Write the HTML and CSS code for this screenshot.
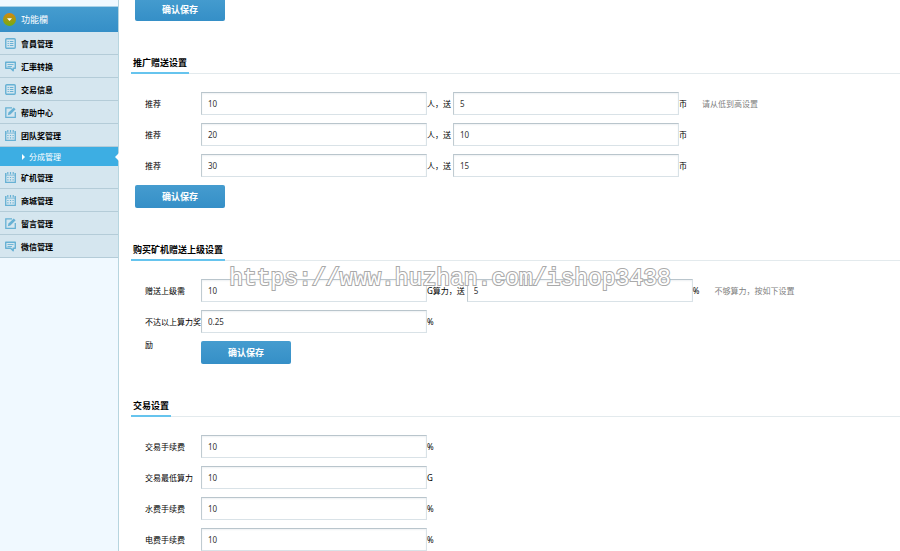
FILE: index.html
```
<!DOCTYPE html>
<html lang="zh-CN">
<head>
  <meta charset="UTF-8">
  <title>分成管理</title>
  <link rel="stylesheet" href="styles.css">
</head>
<body>
  <svg class="sprite" aria-hidden="true">
    <symbol id="icon-list" viewBox="0 0 11 11">
      <rect x="0.75" y="0.75" width="9.5" height="9.5" rx="1" fill="none" stroke="currentColor" stroke-width="1.4"/>
      <path d="M2.6 3.5h1.2M2.6 5.5h1.2M2.6 7.5h1.2M4.8 3.5h3.6M4.8 5.5h3.6M4.8 7.5h3.6" stroke="currentColor"/>
    </symbol>
    <symbol id="icon-chat" viewBox="0 0 11 11">
      <path d="M0.7 1.2h9.6v6H8.2v2.6L5.6 7.2H0.7z" fill="none" stroke="currentColor" stroke-width="1.4" stroke-linejoin="round"/>
      <path d="M2.5 3.5h6M2.5 5.5h4.5" stroke="currentColor" stroke-width="0.9"/>
    </symbol>
    <symbol id="icon-edit" viewBox="0 0 11 11">
      <path d="M7 0.8H0.8v9.5h9.5V5" fill="none" stroke="currentColor" stroke-width="1.3"/>
      <path d="M2.8 8.2l0.7-2.6L8.7 0.4l1.9 1.9L5.4 7.5z" fill="currentColor"/>
    </symbol>
    <symbol id="icon-date" viewBox="0 0 11 11">
      <path d="M1.5 1.7H0.7v8.6h9.6V1.7H9.5" fill="none" stroke="currentColor" stroke-width="1.3"/>
      <path d="M0.7 3.2h9.6" stroke="currentColor" stroke-width="0.7"/>
      <path d="M2.8 0v2.5M5.5 0v2.5M8.2 0v2.5" stroke="currentColor" stroke-width="1.2"/>
      <path d="M2.3 5.5h6.4M2.3 7.8h6.4" stroke="currentColor" stroke-width="1.2" stroke-dasharray="1.2 1.4"/>
    </symbol>
  </svg>

  <aside class="sidebar">
    <div class="menu-head">
      <svg class="head-icon" viewBox="0 0 13 13">
        <defs>
          <linearGradient id="ball" x1="0" y1="0" x2="0" y2="1">
            <stop offset="0" stop-color="#d9860f"/>
            <stop offset="1" stop-color="#6fae12"/>
          </linearGradient>
        </defs>
        <circle cx="6.5" cy="6.5" r="6.5" fill="url(#ball)"/>
        <path d="M4 5.3h5L6.5 8z" fill="#fff"/>
      </svg>
      功能欄
    </div>
    <nav class="menu">
      <a href="#"><svg><use href="#icon-list"/></svg>會員管理</a>
      <a href="#"><svg><use href="#icon-chat"/></svg>汇率转换</a>
      <a href="#"><svg><use href="#icon-list"/></svg>交易信息</a>
      <a href="#"><svg><use href="#icon-edit"/></svg>帮助中心</a>
      <a href="#"><svg><use href="#icon-date"/></svg>团队奖管理</a>
      <a href="#" class="sub active">分成管理</a>
      <a href="#"><svg><use href="#icon-date"/></svg>矿机管理</a>
      <a href="#"><svg><use href="#icon-date"/></svg>商城管理</a>
      <a href="#"><svg><use href="#icon-edit"/></svg>留言管理</a>
      <a href="#"><svg><use href="#icon-chat"/></svg>微信管理</a>
    </nav>
  </aside>

  <main class="content">
    <form class="section">
      <button type="button" class="btn">确认保存</button>
    </form>

    <form class="section">
      <div class="title"><h2>推广赠送设置</h2></div>
      <div class="row">
        <label for="num1">推荐</label>
        <input type="text" id="num1" value="10">
        <label class="unit" for="coin1">人，送</label>
        <input type="text" id="coin1" value="5">
        <span>币</span>
        <span class="hint">请从低到高设置</span>
      </div>
      <div class="row">
        <label for="num2">推荐</label>
        <input type="text" id="num2" value="20">
        <label class="unit" for="coin2">人，送</label>
        <input type="text" id="coin2" value="10">
        <span>币</span>
      </div>
      <div class="row">
        <label for="num3">推荐</label>
        <input type="text" id="num3" value="30">
        <label class="unit" for="coin3">人，送</label>
        <input type="text" id="coin3" value="15">
        <span>币</span>
      </div>
      <button type="button" class="btn">确认保存</button>
    </form>

    <form class="section">
      <div class="title"><h2>购买矿机赠送上级设置</h2></div>
      <div class="row">
        <label for="power">赠送上级需</label>
        <input type="text" id="power" value="10">
        <label class="unit" for="rate">G算力，送</label>
        <input type="text" id="rate" value="5">
        <span>%</span>
        <span class="hint">不够算力，按如下设置</span>
      </div>
      <div class="row">
        <label for="reward">不达以上算力奖励</label>
        <input type="text" id="reward" value="0.25">
        <span>%</span>
      </div>
      <button type="button" class="btn btn-indent">确认保存</button>
    </form>

    <form class="section">
      <div class="title"><h2>交易设置</h2></div>
      <div class="row">
        <label for="fee">交易手续费</label>
        <input type="text" id="fee" value="10">
        <span>%</span>
      </div>
      <div class="row">
        <label for="minpower">交易最低算力</label>
        <input type="text" id="minpower" value="10">
        <span>G</span>
      </div>
      <div class="row">
        <label for="water">水费手续费</label>
        <input type="text" id="water" value="10">
        <span>%</span>
      </div>
      <div class="row">
        <label for="electric">电费手续费</label>
        <input type="text" id="electric" value="10">
        <span>%</span>
      </div>
    </form>
  </main>

  <div class="watermark">https://www.huzhan.com/ishop3438</div>
</body>
</html>
```
FILE: styles.css
```
* {
  box-sizing: border-box;
}

body {
  display: flex;
  height: 100vh;
  margin: 0;
  overflow: hidden;
  background: #fff;
  color: #000;
  font-family: "Noto Sans", "Noto Sans CJK SC", sans-serif;
  font-size: 8px;
}

.sprite {
  position: absolute;
  width: 0;
  height: 0;
}

/* left menu */
.sidebar {
  flex: none;
  width: 119px;
  padding-top: 6px;
  background: #f0f9ff;
  border-right: 1px solid #b7d5df;
}

.menu-head {
  display: flex;
  align-items: center;
  gap: 5px;
  height: 26px;
  padding-left: 3px;
  border-top: 1px solid #a9d2e8;
  background: linear-gradient(#459ccf, #358fc7);
  color: #fff;
  font-size: 9px;
}

.head-icon {
  width: 13px;
  height: 13px;
}

.menu a {
  display: flex;
  align-items: center;
  gap: 5px;
  height: 23px;
  padding-left: 5px;
  background: #d5e6ef;
  border-bottom: 1px solid #b4ccd8;
  color: #000;
  font-weight: bold;
  text-decoration: none;
}

.menu svg {
  width: 11px;
  height: 11px;
  color: #67b1d4;
}

.menu .sub {
  position: relative;
  height: 19px;
  padding-left: 22px;
  gap: 4px;
  border-bottom: 0;
  background: #3daee3;
  color: #fff;
  font-weight: normal;
}

.sub::before {
  content: "";
  border: 3px solid transparent;
  border-left-color: #fff;
  border-right: 0;
}

.sub.active::after {
  content: "";
  position: absolute;
  top: 6px;
  right: -1px;
  border: 4px solid transparent;
  border-right-color: #fff;
  border-left: 0;
}

/* forms */
.content {
  flex: 1;
  margin-top: -2px;
  padding-left: 12px;
}

.section {
  display: flex;
  flex-direction: column;
  align-items: flex-start;
  gap: 8px;
  margin-bottom: 33px;
}

.title {
  display: flex;
  align-self: stretch;
  margin-bottom: 10px;
  border-bottom: 1px solid #e3eaed;
}

.title h2 {
  margin: 0 0 -1px;
  padding: 0 2px;
  border-bottom: 2px solid #66c4ee;
  font-size: 9px;
  line-height: 18px;
}

.row {
  display: flex;
  align-items: flex-start;
  height: 23px;
  padding-left: 14px;
  line-height: 23px;
}

.row label {
  width: 56px;
}

.row .unit {
  width: auto;
  margin-right: 2px;
}

.row input {
  width: 226px;
  height: 23px;
  padding: 0 6px;
  border: 1px solid #d9e2e7;
  border-top-color: #b9c5cc;
  border-left-color: #c0cbd1;
  background: #fff;
  box-shadow: inset 0 1px 2px #eef1f3;
  color: #333;
  font-family: inherit;
  font-size: 8px;
}

.hint {
  margin-left: 15px;
  color: #7f7f7f;
}

.btn {
  width: 90px;
  height: 23px;
  margin-left: 4px;
  padding: 0;
  border: 0;
  border-radius: 2px;
  background: linear-gradient(#459ccf, #358fc7);
  color: #fff;
  font-family: inherit;
  font-size: 9px;
  font-weight: bold;
}

.btn-indent {
  margin-left: 70px;
}

.watermark {
  position: absolute;
  top: 265px;
  left: 0;
  right: 0;
  color: #fff;
  font-family: "Liberation Mono", monospace;
  font-size: 23px;
  line-height: 28px;
  text-align: center;
  pointer-events: none;
  paint-order: stroke;
  -webkit-text-stroke: 2px #a9a9a9;
}
```
